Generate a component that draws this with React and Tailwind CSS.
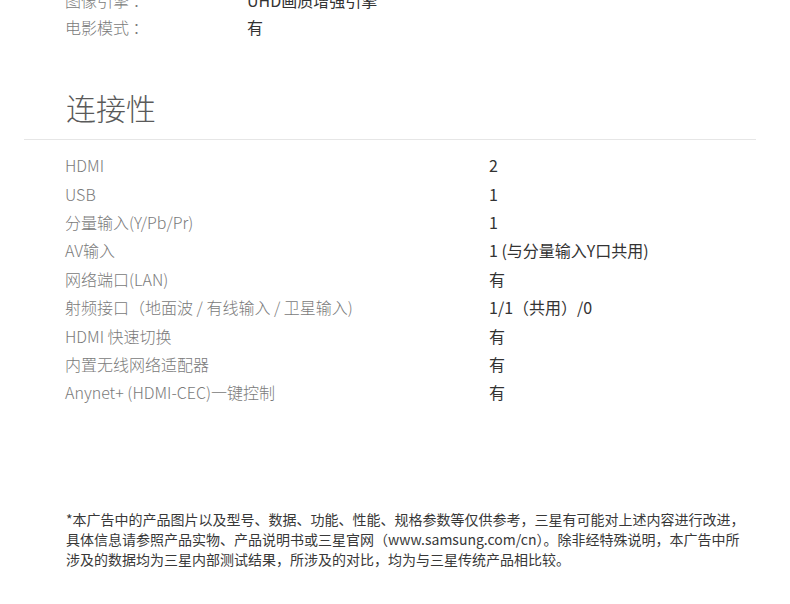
import React from 'react';

const topSpecs = [
  { label: '图像引擎 ：', value: 'UHD画质增强引擎' },
  { label: '电影模式 ：', value: '有' },
];

const connectivity = [
  { label: 'HDMI', value: '2' },
  { label: 'USB', value: '1' },
  { label: '分量输入(Y/Pb/Pr)', value: '1' },
  { label: 'AV输入', value: '1 (与分量输入Y口共用)' },
  { label: '网络端口(LAN)', value: '有' },
  { label: '射频接口（地面波 / 有线输入 / 卫星输入)', value: '1/1（共用）/0' },
  { label: 'HDMI 快速切换', value: '有' },
  { label: '内置无线网络适配器', value: '有' },
  { label: 'Anynet+ (HDMI-CEC)一键控制', value: '有' },
];

const App = () => {
  return (
    <div
      className="w-[790px] h-[604px] overflow-hidden bg-white"
      style={{ fontFamily: '"Noto Sans CJK SC", "Noto Sans", sans-serif' }}
    >
      {/* tail of the previous section, cut off at the top */}
      <div className="-mt-[14px] px-[65px]">
        {topSpecs.map((row) => (
          <div key={row.label} className="flex h-[27px] items-center text-[16px]">
            <span className="w-[182px] font-light text-[#7a7a7a]">{row.label}</span>
            <span className="text-[#333]">{row.value}</span>
          </div>
        ))}
      </div>

      <div className="mt-[47px] px-[66px]">
        <h2 className="text-[30px] font-light leading-[40px] text-[#5a5a5a]">连接性</h2>
      </div>
      <div className="mx-[24px] mt-[12px] h-px w-[732px] bg-[#e6e6e6]" />

      <div className="mt-[11px] px-[65px]">
        {connectivity.map((row) => (
          <div key={row.label} className="flex h-[28.4px] items-center text-[16px]">
            <span className="w-[424px] font-light text-[#7a7a7a]">{row.label}</span>
            <span className="text-[#333]">{row.value}</span>
          </div>
        ))}
      </div>

      <p className="mt-[102px] px-[66px] text-[14px] leading-[20px] text-[#383838] whitespace-nowrap">
        *本广告中的产品图片以及型号、数据、功能、性能、规格参数等仅供参考，三星有可能对上述内容进行改进，
        <br />
        具体信息请参照产品实物、产品说明书或三星官网（www.samsung.com/cn）。除非经特殊说明，本广告中所
        <br />
        涉及的数据均为三星内部测试结果，所涉及的对比，均为与三星传统产品相比较。
      </p>
    </div>
  );
};

export default App;
